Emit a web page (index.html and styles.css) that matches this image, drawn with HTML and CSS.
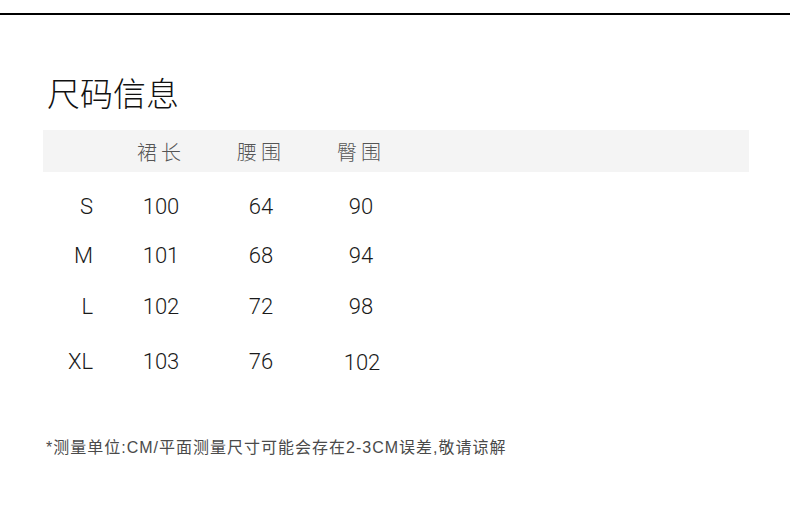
FILE: index.html
```html
<!DOCTYPE html>
<html lang="zh-CN">
<head>
<meta charset="utf-8">
<title>尺码信息</title>
<link rel="stylesheet" href="styles.css">
</head>
<body>
<div class="rule"></div>
<h1 class="title">尺码信息</h1>
<div class="table">
  <div class="row head">
    <div class="cell size"></div>
    <div class="cell c2">裙长</div>
    <div class="cell c3">腰围</div>
    <div class="cell c4">臀围</div>
  </div>
  <div class="body">
    <div class="row r1">
      <div class="cell size">S</div>
      <div class="cell c2">100</div>
      <div class="cell c3">64</div>
      <div class="cell c4">90</div>
    </div>
    <div class="row r2">
      <div class="cell size">M</div>
      <div class="cell c2">101</div>
      <div class="cell c3">68</div>
      <div class="cell c4">94</div>
    </div>
    <div class="row r3">
      <div class="cell size">L</div>
      <div class="cell c2">102</div>
      <div class="cell c3">72</div>
      <div class="cell c4">98</div>
    </div>
    <div class="row r4">
      <div class="cell size">XL</div>
      <div class="cell c2">103</div>
      <div class="cell c3">76</div>
      <div class="cell c4 shift">102</div>
    </div>
  </div>
</div>
<p class="note">*测量单位:CM/平面测量尺寸可能会存在2-3CM误差,敬请谅解</p>
</body>
</html>
```
FILE: styles.css
```css
html, body {
  margin: 0;
  padding: 0;
  background: #ffffff;
}
body {
  width: 790px;
  height: 509px;
  overflow: hidden;
  font-family: "Liberation Sans", "Noto Sans CJK SC", sans-serif;
  color: #222;
}
.rule {
  margin-top: 13px;
  height: 2px;
  background: #000;
}
.title {
  margin: 57px 0 0 47px;
  font-family: "Noto Sans CJK SC", sans-serif;
  font-weight: 300;
  font-size: 33px;
  line-height: 40px;
  color: #111;
  letter-spacing: 0;
}
.table {
  margin: 18px 41px 0 43px;
}
.row {
  display: grid;
  grid-template-columns: 51px 134px 66px 134px 1fr;
  align-items: center;
}
.head {
  height: 42px;
  background: #f4f4f4;
}
.head .cell {
  font-family: "Noto Sans CJK SC", sans-serif;
  font-weight: 300;
  font-size: 20px;
  letter-spacing: 4px;
  padding-left: 0;
  color: #555;
  text-align: center;
}
.body {
  margin-top: 11px;
}
.r1 { height: 48px; }
.r2 { height: 50px; }
.r3 { height: 52px; }
.r4 { height: 58px; }
.body .cell {
  font-family: Roboto, "Liberation Sans", sans-serif;
  font-weight: 300;
  font-size: 22px;
  line-height: 24px;
  color: #1a1a1a;
  text-align: center;
}
.body .size {
  text-align: right;
  padding-right: 1px;
}
.shift {
  position: relative;
  top: 1px;
  left: 1px;
}
.note {
  margin: 47px 0 0 46px;
  font-family: "Liberation Sans", "Noto Sans CJK SC", sans-serif;
  font-size: 16px;
  line-height: 20px;
  letter-spacing: 1px;
  color: #4a4a4a;
}
```
